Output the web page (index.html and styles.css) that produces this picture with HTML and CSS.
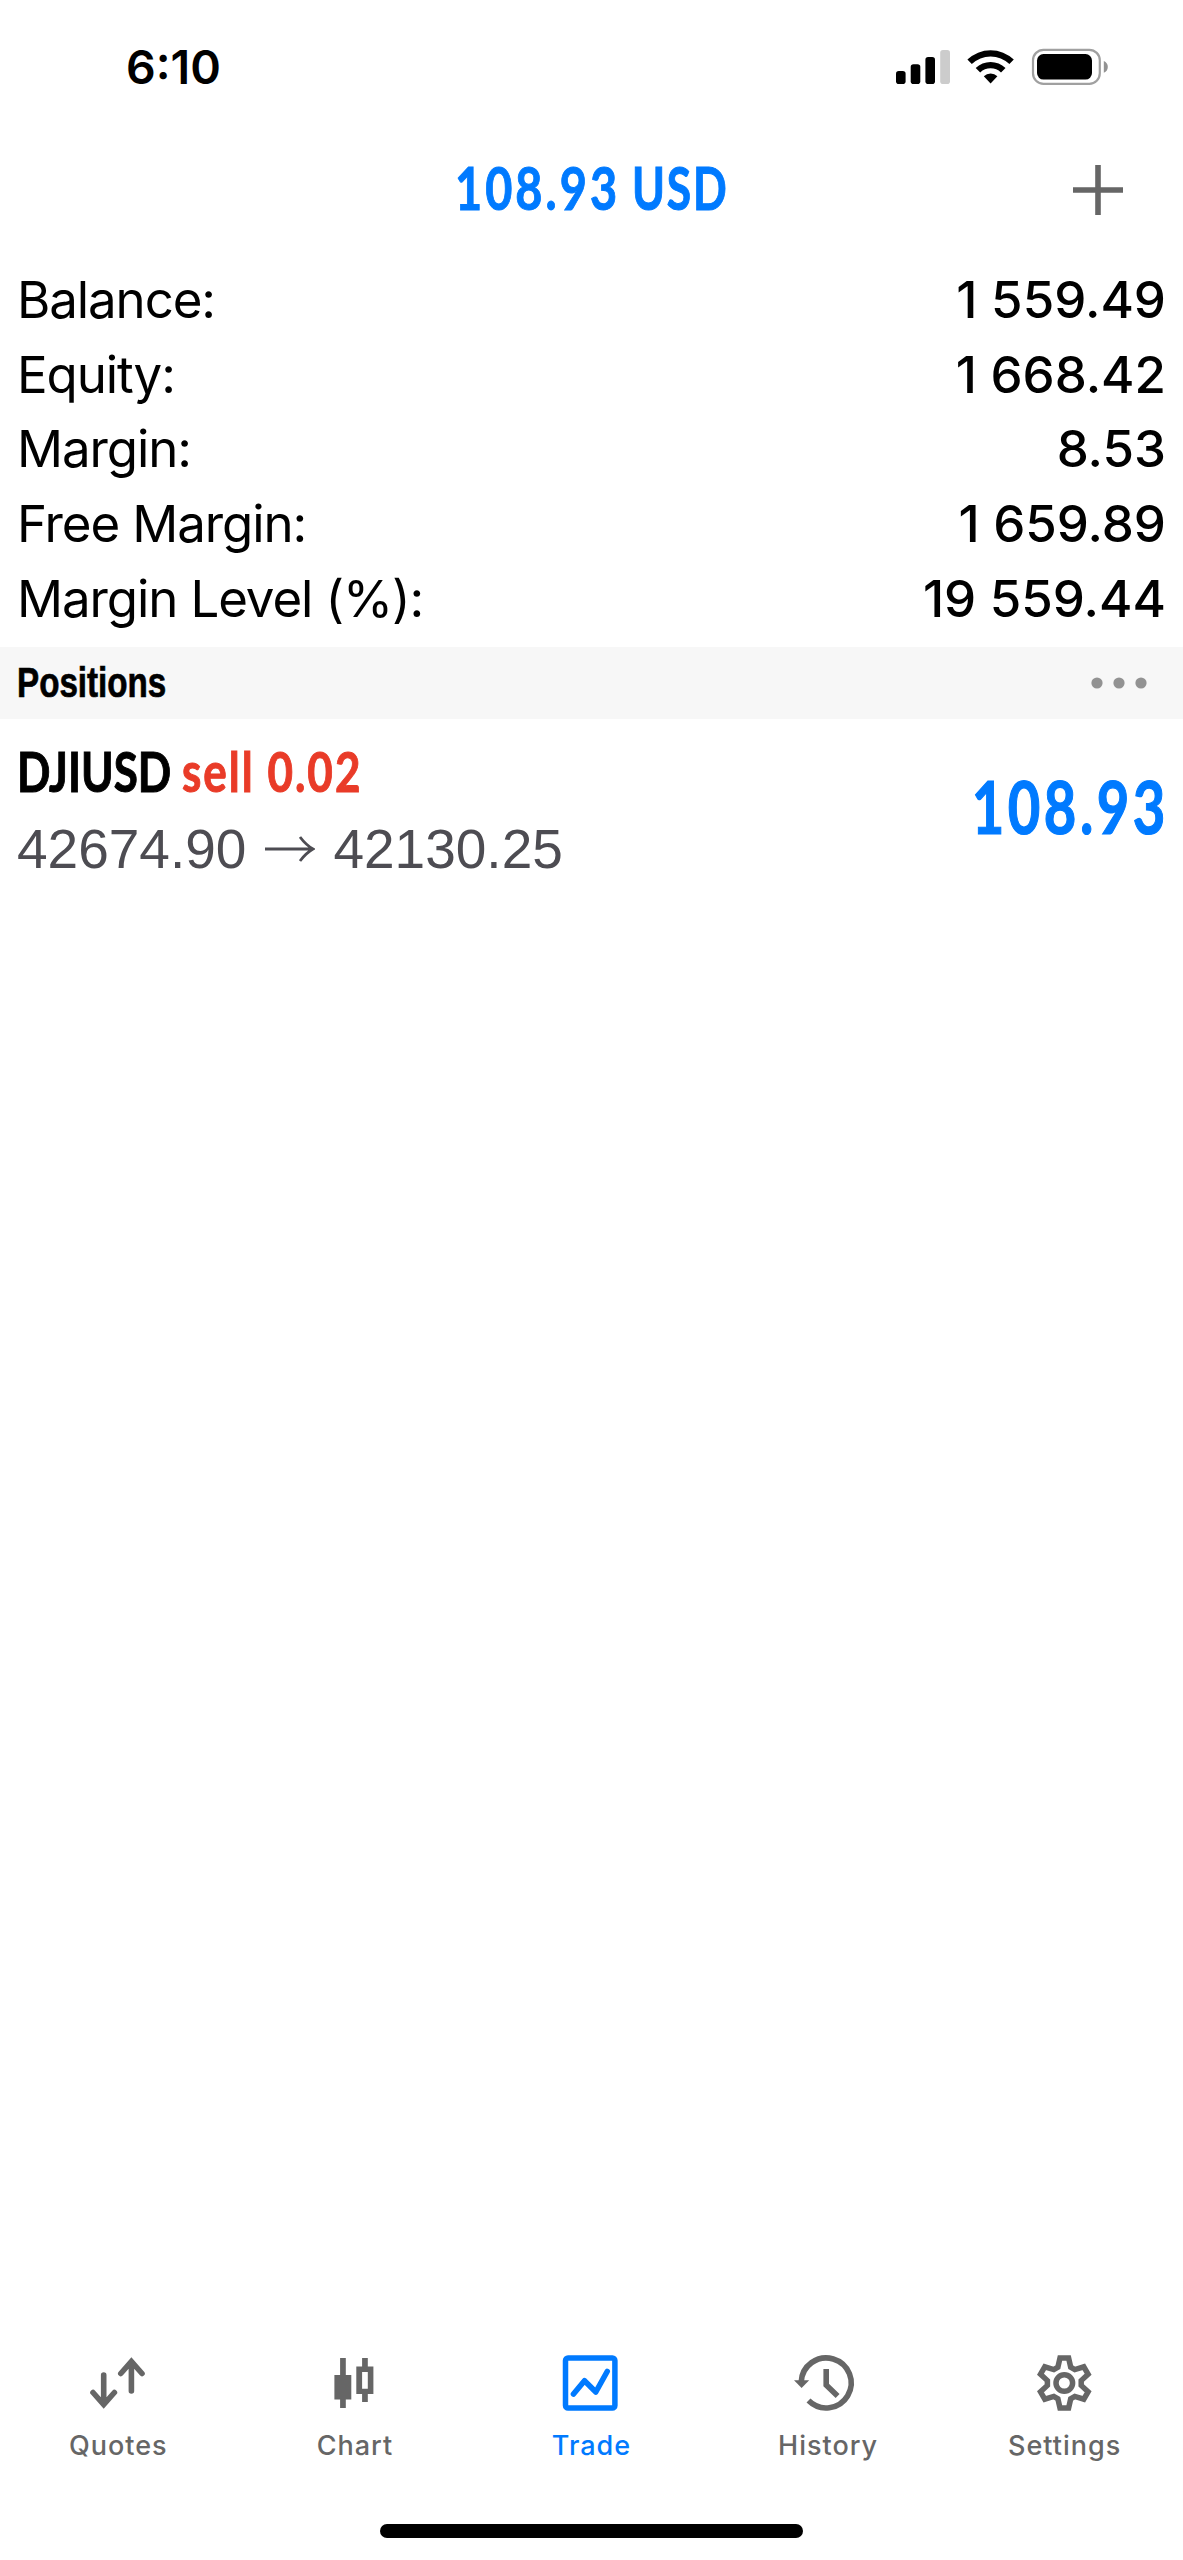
FILE: index.html
```html
<!DOCTYPE html>
<html lang="en">
<head>
<meta charset="utf-8">
<title>Trade</title>
<link rel="stylesheet" href="styles.css">
</head>
<body>
<div class="screen">
  <header class="status">
    <span class="time">6:10</span>
    <svg class="status-icons" viewBox="0 0 216 40" width="216" height="40">
      <rect x="0" y="24" width="9.6" height="13" rx="2.8"/>
      <rect x="14.7" y="17.3" width="9.6" height="19.7" rx="2.8"/>
      <rect x="29.4" y="10" width="9.6" height="27" rx="2.8"/>
      <rect x="44.2" y="3" width="9.8" height="34" rx="2.8" fill="#ccc"/>
      <path d="M71.4 12.6A33.5 33.5 0 0 1 117.8 12.6L113.4 17.1A27.2 27.2 0 0 0 75.8 17.1Z"/>
      <path d="M79.7 20.9A21.6 21.6 0 0 1 109.5 20.9L105 25.4A15.2 15.2 0 0 0 84.2 25.4Z"/>
      <path d="M87.8 29.2A9.8 9.8 0 0 1 101.4 29.2L94.6 36.6Z"/>
      <rect x="137" y="2.8" width="66.8" height="34" rx="10.5" fill="none" stroke="#a0a0a0" stroke-width="2.2"/>
      <rect x="141" y="7" width="55" height="25.6" rx="6.5"/>
      <path d="M207.8 14Q211.8 16 211.8 19.9T207.8 25.8Z" fill="#929292"/>
    </svg>
  </header>
  <div class="navbar">
    <h1 class="profit-title"><span class="amount">108.93</span> <span class="currency">USD</span></h1>
    <svg class="add" viewBox="0 0 50 50" width="50" height="50"><path d="M25 0V50M0 25H50" stroke="#666" stroke-width="5.6"/></svg>
  </div>
  <dl class="account">
    <div class="row"><dt>Balance:</dt><dd>1 559.49</dd></div>
    <div class="row"><dt>Equity:</dt><dd>1 668.42</dd></div>
    <div class="row"><dt>Margin:</dt><dd>8.53</dd></div>
    <div class="row"><dt>Free Margin:</dt><dd>1 659.89</dd></div>
    <div class="row"><dt>Margin Level (%):</dt><dd>19 559.44</dd></div>
  </dl>
  <div class="section">
    <h2 class="section-title">Positions</h2>
    <svg class="more" viewBox="0 0 56 12" width="56" height="12" fill="#929292"><circle cx="6" cy="6" r="5.6"/><circle cx="28" cy="6" r="5.6"/><circle cx="50" cy="6" r="5.6"/></svg>
  </div>
  <main class="position">
    <div class="details">
      <div class="deal"><span class="symbol">DJIUSD</span><span class="side">sell 0.02</span></div>
      <div class="prices"><span>42674.90</span><svg class="arrow" viewBox="0 0 50 28" width="50" height="28"><path d="M0 14H48M35 2Q41 10 48 14Q41 18 35 26" fill="none" stroke="#4d4c52" stroke-width="2.8"/></svg><span>42130.25</span></div>
    </div>
    <span class="profit">108.93</span>
  </main>
  <nav class="tabs">
    <a class="tab">
      <svg class="icon" viewBox="-36 -36 72 72"><path d="M-14.3 -8V21M-25 9.5L-14.3 21.5L-3.6 9.5M13.4 8V-21M2.8 -9.5L13.4 -21.5L24 -9.5" fill="none" stroke="currentColor" stroke-width="5.6" stroke-linecap="round"/></svg>
      <span>Quotes</span>
    </a>
    <a class="tab">
      <svg class="icon" viewBox="-36 -36 72 72" fill="currentColor"><path d="M-14.9 -25h5.7v17h5.5v24.5h-5.5V25h-5.7v-8.5h-5.7V-8h5.7z"/><path fill-rule="evenodd" d="M7.1 -25h5.7v8.5h5.6V11h-5.6v8H7.1v-8H1.3v-27.5h5.8zM7.1 -11V5.7h5.7V-11z"/></svg>
      <span>Chart</span>
    </a>
    <a class="tab active">
      <svg class="icon" viewBox="-36 -36 72 72" fill="none" stroke="currentColor" stroke-width="5.5"><rect x="-25.5" y="-25.1" width="49.4" height="50.2" rx="2.5"/><path d="M-17.5 11L-6.5 -2.3L4.8 9L16.2 -11.5" stroke-linecap="round" stroke-linejoin="round" stroke-width="5.6"/></svg>
      <span>Trade</span>
    </a>
    <a class="tab">
      <svg class="icon" viewBox="-36 -36 72 72"><path d="M-26.8 -1A25 25 0 1 1 -19.5 17.6M-1.8 -14V2L9.6 13" fill="none" stroke="currentColor" stroke-width="5.6"/><path d="M-34 -2.7H-18.8L-26.4 4.9Z" fill="currentColor"/></svg>
      <span>History</span>
    </a>
    <a class="tab">
      <svg class="icon" viewBox="-35.3 -36 72 72" fill="none" stroke="currentColor" stroke-width="5.5"><circle r="8.3"/><path d="M-6.4 -15.8L-4.3 -25H4.3L6.4 -15.8L10.5 -13.4L19.5 -16.2L23.8 -8.8L16.9 -2.4V2.4L23.8 8.8L19.5 16.2L10.5 13.4L6.4 15.8L4.3 25H-4.3L-6.4 15.8L-10.5 13.4L-19.5 16.2L-23.8 8.8L-16.9 2.4V-2.4L-23.8 -8.8L-19.5 -16.2L-10.5 -13.4Z"/></svg>
      <span>Settings</span>
    </a>
  </nav>
  <div class="home"></div>
</div>
</body>
</html>
```
FILE: styles.css
```css
* { box-sizing: border-box; margin: 0; padding: 0; }
body { background: #fff; color: #000; font-family: Inter, "Liberation Sans", sans-serif; }
.screen { width: 1183px; height: 2560px; display: flex; flex-direction: column; background: #fff; overflow: hidden; }

.status { height: 134px; padding: 0 71px 0 126px; display: flex; align-items: center; justify-content: space-between; }
.time { font-size: 46.5px; font-weight: 600; line-height: 60px; }
.status-icons { display: block; }

.navbar { height: 112px; display: grid; grid-template-columns: 1fr auto 1fr; align-items: center; }
.profit-title { grid-column: 2; display: flex; font: 700 60px/72px Lato, sans-serif; color: #007aff; white-space: nowrap; -webkit-text-stroke: 1px currentColor; margin-top: -6px; }
.amount { width: 177px; letter-spacing: 3.9px; transform: scaleX(.78); transform-origin: left; }
.currency { width: 96px; letter-spacing: 2.5px; transform: scaleX(.74); transform-origin: left; }
.add { justify-self: end; margin-right: 60px; }

.account { height: 401px; padding: 17px 17px 0 17px; }
.row { display: flex; justify-content: space-between; height: 74.65px; line-height: 74.65px; font-size: 51px; }
.row dt { white-space: nowrap; letter-spacing: -1.1px; }
.row dd { font-weight: 500; }

.section { height: 72px; padding: 0 36px 0 17px; display: flex; align-items: center; justify-content: space-between; background: #f7f7f7; }
.section-title { font: 700 42px/72px "Liberation Sans", sans-serif; -webkit-text-stroke: .7px currentColor; transform: scaleX(.79); transform-origin: left; }

.position { height: 180px; padding: 0 18px 0 17px; display: flex; justify-content: space-between; }
.details { padding-top: 16px; }
.deal { display: flex; height: 74px; font: 700 55px/72px Lato, sans-serif; white-space: nowrap; -webkit-text-stroke: 1px currentColor; }
.symbol { width: 165px; transform: scaleX(.8); transform-origin: left; }
.side { color: #e93b28; letter-spacing: 2.5px; transform: scaleX(.8); transform-origin: left; }
.prices { display: flex; align-items: center; height: 80px; font: 55px/80px "Liberation Sans", sans-serif; color: #4d4c52; }
.arrow { margin: 0 18px 0 19px; }
.profit { font: 700 72px/88px Lato, sans-serif; color: #007aff; letter-spacing: 4.5px; -webkit-text-stroke: 1.2px currentColor; transform: scaleX(.78); transform-origin: right; margin: 43px -4px 0 0; }

.tabs { margin-top: auto; height: 177px; display: grid; grid-template-columns: repeat(5, 1fr); }
.tab { display: flex; flex-direction: column; align-items: center; color: #666; font-size: 27px; font-weight: 500; line-height: 36px; letter-spacing: 1px; }
.tab.active { color: #007aff; }
.icon { display: block; width: 72px; height: 72px; margin-bottom: 9px; }
.home { width: 423px; height: 14px; margin: 0 auto 22px; background: #000; border-radius: 7px; }
```
